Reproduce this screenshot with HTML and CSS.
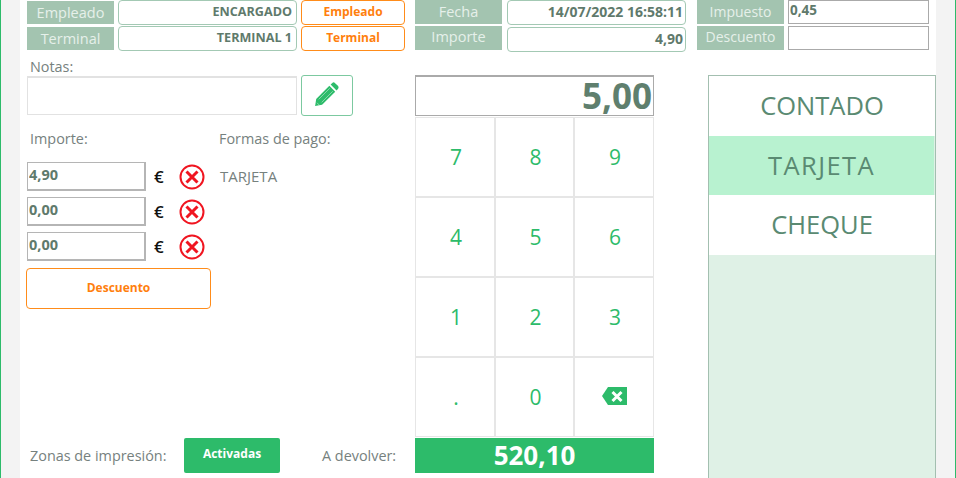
FILE: index.html
```html
<!doctype html>
<html>
<head>
<meta charset="utf-8">
<title>Cobro</title>
<link rel="stylesheet" href="styles.css">
</head>
<body>
<div class="frame">
<div class="panel">

	<div class="head">
		<div class="group groupEmp">
			<div class="tag">Empleado</div>
			<div class="field">ENCARGADO</div>
			<button class="btnOrange">Empleado</button>
			<div class="tag">Terminal</div>
			<div class="field">TERMINAL 1</div>
			<button class="btnOrange">Terminal</button>
		</div>
		<div class="group groupDate">
			<div class="tag">Fecha</div>
			<div class="field num">14/07/2022 16:58:11</div>
			<div class="tag up">Importe</div>
			<div class="field num">4,90</div>
		</div>
		<div class="group groupTax">
			<div class="tag">Impuesto</div>
			<input class="taxInput" value="0,45">
			<div class="tag up">Descuento</div>
			<input class="taxInput" value="">
		</div>
	</div>

	<div class="main">
		<div class="colLeft">
			<div class="label notesLabel">Notas:</div>
			<div class="notesRow">
				<textarea class="notes"></textarea>
				<button class="btnEdit">
					<svg width="29" height="29" viewBox="0 0 34 34"><path class="greenFill" d="M21.500 5.600 28.400 12.500 13 27.900 4.800 29.200 6.100 21Z"/><path class="greenFill" d="M23 4 25 2.200Q26.500 1 28 2.200L31.800 6Q33 7.500 31.800 9L30 11Z"/><path class="pencilLine" d="M9 21.500 22 8.500M12.500 25 25.500 12M7 25.500 10 28.500"/></svg>
				</button>
			</div>
			<div class="payHead">
				<div class="payCol label">Importe:</div>
				<div class="label">Formas de pago:</div>
			</div>
			<div class="payRow">
				<input class="amount" value="4,90">
				<span class="euro">€</span>
				<svg class="del" width="26" height="26" viewBox="0 0 26 26"><circle cx="13" cy="13" r="11.500"/><path d="M7.500 7.500 18.500 18.500M18.500 7.500 7.500 18.500"/></svg>
				<span class="payName">TARJETA</span>
			</div>
			<div class="payRow">
				<input class="amount" value="0,00">
				<span class="euro">€</span>
				<svg class="del" width="26" height="26" viewBox="0 0 26 26"><circle cx="13" cy="13" r="11.500"/><path d="M7.500 7.500 18.500 18.500M18.500 7.500 7.500 18.500"/></svg>
			</div>
			<div class="payRow">
				<input class="amount" value="0,00">
				<span class="euro">€</span>
				<svg class="del" width="26" height="26" viewBox="0 0 26 26"><circle cx="13" cy="13" r="11.500"/><path d="M7.500 7.500 18.500 18.500M18.500 7.500 7.500 18.500"/></svg>
			</div>
			<button class="btnOrange btnDiscount">Descuento</button>
			<div class="zones">
				<span class="label zoneLabel">Zonas de impresión:</span>
				<button class="btnGreen">Activadas</button>
				<span class="label backLabel">A devolver:</span>
			</div>
		</div>

		<div class="colMid">
			<div class="display">5,00</div>
			<div class="keys">
				<button class="key">7</button>
				<button class="key">8</button>
				<button class="key">9</button>
				<button class="key">4</button>
				<button class="key">5</button>
				<button class="key">6</button>
				<button class="key">1</button>
				<button class="key">2</button>
				<button class="key">3</button>
				<button class="key">.</button>
				<button class="key">0</button>
				<button class="key keyBack">
					<svg width="25" height="18" viewBox="0 0 25 18"><path class="greenFill" d="M6 0H25V18H6L0 9Z"/><path class="keyCross" d="M10.500 5 19.500 14M19.500 5 10.500 14"/></svg>
				</button>
			</div>
			<div class="change">520,10</div>
		</div>

		<div class="colRight">
			<div class="payType">CONTADO</div>
			<div class="payType selected">TARJETA</div>
			<div class="payType">CHEQUE</div>
		</div>
	</div>

</div>
</div>
</body>
</html>
```

FILE: styles.css
```css
html,body {
	height:100%;
	margin:0;
	overflow:hidden;
	font-family:"Open Sans",sans-serif;
	color:#76817e;
}
button,input,textarea {
	font-family:inherit;
	box-sizing:border-box;
	margin:0;
	outline:none;
}
.frame {
	box-sizing:border-box;
	height:100%;
	padding:0 19px 0 19px;
	border-left:1px solid #2dbb6a;
	border-right:1px solid #2dbb6a;
	background-color:#f3f3f3;
}
.panel {
	height:100%;
	padding-left:7px;
	background-color:#fff;
	display:flex;
	flex-direction:column;
}
.head {
	display:flex;
	height:51px;
}
.group {
	display:grid;
	grid-template-rows:25px 25px;
	row-gap:1px;
}
.groupEmp {
	grid-template-columns:87px 179px 104px;
	column-gap:4px;
	width:378px;
	margin-right:10px;
}
.groupDate {
	grid-template-columns:87px 179px;
	column-gap:5px;
	row-gap:2px;
	margin-right:11px;
}
.groupTax {
	grid-template-columns:87px 141px;
	column-gap:4px;
}
.tag {
	background-color:#a3c4b0;
	color:#e6f0ea;
	font-size:14px;
	text-align:center;
	line-height:23px;
	height:24px;
}
.up {
	line-height:21px;
}
.groupDate .tag {
	font-size:14.500px;
}
.groupDate .up {
	margin-top:-1px;
}
.groupEmp .tag {
	margin-top:1px;
	height:23px;
	font-size:14.500px;
}
.field {
	box-sizing:border-box;
	border:1px solid #a3c9b4;
	border-radius:4px;
	padding-right:4px;
	text-align:right;
	color:#5f7a6c;
	font-size:12.600px;
	font-weight:bold;
	line-height:22px;
}
.num {
	font-size:14px;
	padding-right:2px;
}
.btnOrange {
	background-color:#fff;
	border:1px solid #ff8c1a;
	border-radius:4px;
	color:#ff7f0e;
	font-size:12px;
	font-weight:bold;
	padding:0 0 3px;
}
.taxInput {
	width:100%;
	height:24px;
	border:1px solid #aaa;
	padding:0 1px 4px;
	color:#5f7a6c;
	font-size:13.500px;
	font-weight:bold;
}
.main {
	flex:1;
	min-height:0;
	display:flex;
}
.colLeft {
	box-sizing:border-box;
	width:378px;
	margin-right:10px;
	padding-top:5px;
	display:flex;
	flex-direction:column;
}
.label {
	font-size:14.400px;
	line-height:19px;
	padding-left:3px;
}
.notesLabel {
	margin-top:1px;
	margin-bottom:-1px;
}
.notesRow {
	display:flex;
	gap:4px;
}
.notes {
	width:270px;
	height:39px;
	margin-top:1px;
	border:1px solid #e2e2e2;
	border-width:2px 1px 1px 1px;
	resize:none;
}
.btnEdit {
	width:52px;
	height:41px;
	padding:0 4px 0 0;
	background-color:#fff;
	border:1px solid #7cc9a0;
	border-radius:3px;
	display:flex;
	align-items:center;
	justify-content:center;
}
.greenFill {
	fill:#2dbb6a;
}
.pencilLine {
	fill:none;
	stroke:#fff;
	stroke-width:1;
	opacity:.5;
}
.payHead {
	display:flex;
	margin-top:13px;
	margin-bottom:14px;
}
.payCol {
	width:186px;
}
.payRow {
	display:flex;
	align-items:center;
	height:29px;
	margin-bottom:6px;
}
.amount {
	width:119px;
	height:29px;
	border:1px solid #b5b5b5;
	border-width:1px 2px 2px 1px;
	padding:0 1px 3px;
	color:#5f7a6c;
	font-size:14.500px;
	font-weight:bold;
}
.euro {
	width:33px;
	padding-left:8px;
	box-sizing:border-box;
	color:#111;
	font-size:17px;
	font-weight:600;
}
.del {
	fill:none;
	stroke:#f01520;
	stroke-width:2;
	margin-right:15px;
}
.del path {
	stroke-width:3;
}
.payName {
	font-size:15px;
	margin-top:-2px;
}
.btnDiscount {
	width:185px;
	height:41px;
	margin-left:-1px;
	margin-top:1px;
	padding:0 0 3px;
}
.zones {
	margin-top:auto;
	margin-bottom:5px;
	height:35px;
	display:flex;
	align-items:center;
}
.zoneLabel {
	width:154px;
}
.btnGreen {
	width:96px;
	height:35px;
	padding:0 0 5px;
	background-color:#2dbb6a;
	border:0;
	border-radius:2px;
	color:#fff;
	font-size:12px;
	font-weight:bold;
}
.backLabel {
	margin-left:39px;
}
.colMid {
	width:239px;
	margin-right:54px;
	padding-top:24px;
}
.display {
	box-sizing:border-box;
	height:41px;
	border:1px solid #aaa;
	border-width:2px 1px 1px 1px;
	padding-right:1px;
	text-align:right;
	color:#5f7f6e;
	font-size:35px;
	font-weight:bold;
	line-height:38px;
}
.keys {
	display:grid;
	grid-template-columns:80px 79px 80px;
	grid-template-rows:repeat(4,80px);
	margin-top:1px;
}
.key {
	padding:0 0 0 2px;
	background-color:#fff;
	border:1px solid #e6e6e6;
	color:#2dbb6a;
	font-size:21px;
}
.keyBack {
	padding:0 0 1px 1px;
}
.change {
	height:35px;
	margin-top:1px;
	background-color:#2dbb6a;
	color:#fff;
	text-align:center;
	font-size:26px;
	font-weight:bold;
	line-height:35px;
}
.colRight {
	box-sizing:border-box;
	width:228px;
	height:calc(100% - 24px);
	margin-top:24px;
	border:1px solid #a3bfb0;
	border-bottom:0;
	background-color:#dff1e6;
}
.payType {
	height:60px;
	background-color:#fff;
	color:#5a8a72;
	font-size:25.500px;
	text-align:center;
	line-height:58px;
}
.selected {
	height:59px;
	margin-right:1px;
	letter-spacing:1.400px;
	background-color:#b8f2d0;
}
.keyCross {
	fill:none;
	stroke:#fff;
	stroke-width:3;
}
```
